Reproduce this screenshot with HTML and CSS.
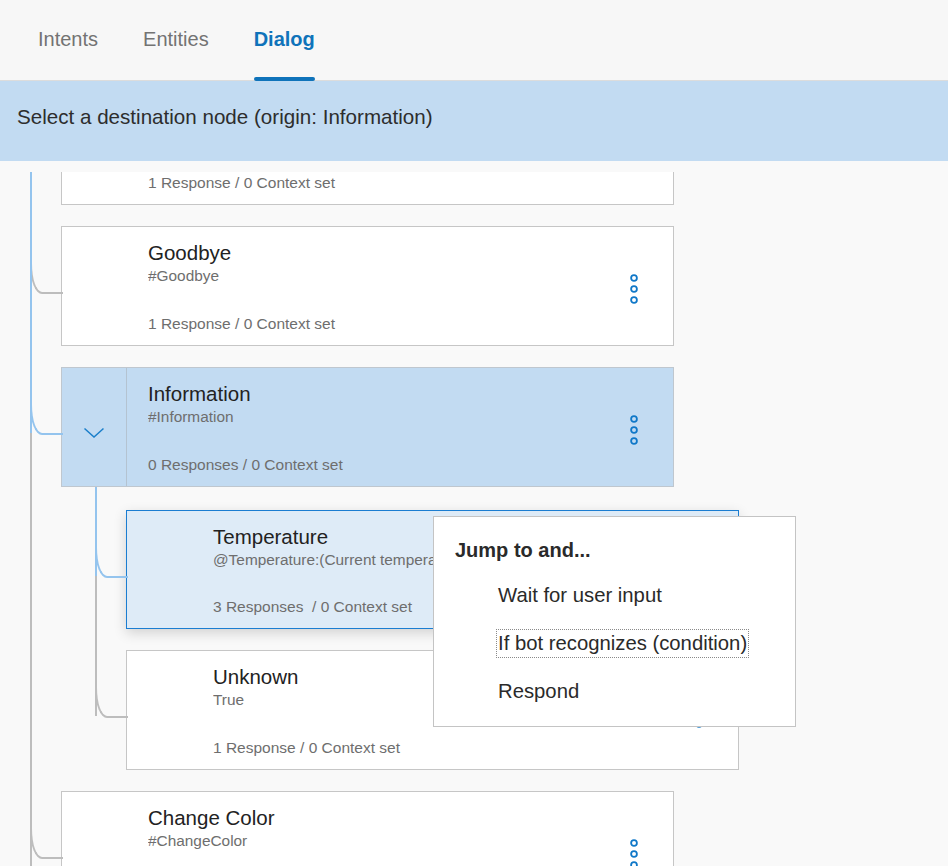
FILE: index.html
```html
<!DOCTYPE html>
<html lang="en">
<head>
<meta charset="utf-8">
<title>Dialog</title>
<link rel="stylesheet" href="styles.css">
</head>
<body>
<header class="tabs">
  <a class="tab">Intents</a>
  <a class="tab">Entities</a>
  <a class="tab active">Dialog</a>
</header>
<div class="banner">Select a destination node (origin: Information)</div>
<main class="canvas">
  <div class="viewport">
    <ul class="nodes level1">
      <li class="node on-rail">
        <div class="card">
          <div class="body">
            <div class="meta">1 Response / 0 Context set</div>
          </div>
        </div>
      </li>
      <li class="node on-rail">
        <div class="card">
          <div class="body">
            <div class="title">Goodbye</div>
            <div class="cond">#Goodbye</div>
            <div class="meta">1 Response / 0 Context set</div>
          </div>
          <svg class="kebab" width="12" height="32" viewBox="0 0 12 32"><circle cx="6" cy="5" r="2.9"/><circle cx="6" cy="16" r="2.9"/><circle cx="6" cy="27" r="2.9"/></svg>
        </div>
      </li>
      <li class="node branch-on">
        <div class="card selected">
          <div class="toggle">
            <svg width="22" height="12" viewBox="0 0 22 12"><path d="M1.5 1.5 L11 10 L20.5 1.5" fill="none" stroke="#1b7fca" stroke-width="1.5"/></svg>
          </div>
          <div class="body">
            <div class="title">Information</div>
            <div class="cond">#Information</div>
            <div class="meta">0 Responses / 0 Context set</div>
          </div>
          <svg class="kebab" width="12" height="32" viewBox="0 0 12 32"><circle cx="6" cy="5" r="2.9"/><circle cx="6" cy="16" r="2.9"/><circle cx="6" cy="27" r="2.9"/></svg>
        </div>
        <ul class="nodes children">
          <li class="node branch-on first">
            <div class="card target">
              <div class="body">
                <div class="title">Temperature</div>
                <div class="cond">@Temperature:(Current temperature)</div>
                <div class="meta">3 Responses&nbsp; / 0 Context set</div>
              </div>
              <svg class="kebab" width="12" height="32" viewBox="0 0 12 32"><circle cx="6" cy="5" r="2.9"/><circle cx="6" cy="16" r="2.9"/><circle cx="6" cy="27" r="2.9"/></svg>
            </div>
            <div class="popup">
              <h3 class="popup-title">Jump to and...</h3>
              <ul class="popup-list">
                <li class="popup-item">Wait for user input</li>
                <li class="popup-item focus">If bot recognizes (condition)</li>
                <li class="popup-item">Respond</li>
              </ul>
            </div>
          </li>
          <li class="node last">
            <div class="card">
              <div class="body">
                <div class="title">Unknown</div>
                <div class="cond">True</div>
                <div class="meta">1 Response / 0 Context set</div>
              </div>
              <svg class="kebab" width="12" height="32" viewBox="0 0 12 32"><circle cx="6" cy="5" r="2.9"/><circle cx="6" cy="16" r="2.9"/><circle cx="6" cy="27" r="2.9"/></svg>
            </div>
          </li>
        </ul>
      </li>
      <li class="node">
        <div class="card">
          <div class="body">
            <div class="title">Change Color</div>
            <div class="cond">#ChangeColor</div>
          </div>
          <svg class="kebab" width="12" height="32" viewBox="0 0 12 32"><circle cx="6" cy="5" r="2.9"/><circle cx="6" cy="16" r="2.9"/><circle cx="6" cy="27" r="2.9"/></svg>
        </div>
      </li>
    </ul>
  </div>
</main>
</body>
</html>
```
FILE: styles.css
```css
* { box-sizing: border-box; }
html, body { margin: 0; padding: 0; }
body {
  width: 948px;
  height: 866px;
  overflow: hidden;
  background: #f9f9f9;
  font-family: "Liberation Sans", Arial, Helvetica, sans-serif;
  color: #222;
}

/* tabs */
.tabs {
  display: flex;
  gap: 45px;
  height: 81px;
  padding: 27px 0 0 38px;
  background: #f7f7f7;
  border-bottom: 1px solid #dcdcdc;
}
.tab {
  font-size: 20px;
  line-height: 24px;
  color: #737373;
  text-decoration: none;
}
.tab::after {
  content: "";
  display: block;
  height: 4px;
  margin-top: 26px;
  border-radius: 2px;
}
.tab.active { color: #0f73ba; font-weight: bold; }
.tab.active::after { background: #0f73ba; }

/* banner */
.banner {
  height: 80px;
  padding: 24px 17px 0;
  background: #c2dbf2;
  font-size: 20.6px;
  line-height: 24px;
  color: #2d2d2d;
}

/* canvas */
.canvas { padding-top: 11px; }
.viewport { height: 694px; overflow: hidden; position: relative; }

.nodes { list-style: none; margin: 0; padding: 0 0 0 65px; }
.level1 { padding-left: 61px; margin-top: -108px; }

.node { position: relative; padding-top: 21px; }
.node.first { padding-top: 23px; }

/* vertical rail */
.node::before {
  content: "";
  position: absolute;
  left: -31px;
  top: 0;
  bottom: 0;
  width: 2px;
  background: #bdbdbd;
  z-index: 2;
}
/* elbow connector */
.node::after {
  content: "";
  position: absolute;
  left: -31px;
  top: 55px;
  width: 31px;
  height: 32px;
  border-left: 2px solid #bdbdbd;
  border-bottom: 2px solid #bdbdbd;
  border-bottom-left-radius: 12px 30px;
  z-index: 1;
}
.node.first::after { top: 57px; }

.node.on-rail::before { background: #94c4ee; }
.node.branch-on::before { background: linear-gradient(#94c4ee 0 87px, #bdbdbd 87px); }
.node.branch-on.first::before { background: linear-gradient(#94c4ee 0 89px, #bdbdbd 89px); }
.node.branch-on::after { border-color: #94c4ee; }
.node.last::before { bottom: auto; height: 87px; }

/* cards */
.card {
  display: flex;
  width: 613px;
  height: 120px;
  background: #fff;
  border: 1px solid #c6c6c6;
}
.body {
  flex: 1;
  min-width: 0;
  display: flex;
  flex-direction: column;
  padding: 14px 0 12px 86px;
}
.title { font-size: 20.5px; line-height: 24px; color: #222; }
.cond {
  margin-top: 2px;
  font-size: 15.4px;
  line-height: 18px;
  color: #6e6e6e;
  white-space: nowrap;
  overflow: hidden;
}
.meta { margin-top: auto; font-size: 15.5px; line-height: 18px; color: #6e6e6e; white-space: nowrap; }
.kebab { flex: none; margin: 46px 33px 0 0; fill: none; stroke: #1078c8; stroke-width: 1.8; }

.card.selected { background: #c2dbf2; border-color: #bfc7cf; }
.toggle {
  flex: none;
  width: 65px;
  border-right: 1px solid #b4c3d1;
  display: flex;
  align-items: center;
  justify-content: center;
  padding-top: 12px;
}
.selected .body { padding-left: 21px; }

.card.target {
  height: 119px;
  background: #deebf7;
  border-color: #1b7dd1;
  box-shadow: 0 4px 12px rgba(0, 0, 0, 0.16);
}

/* popup menu */
.popup {
  position: absolute;
  left: 307px;
  top: 29px;
  width: 363px;
  height: 211px;
  padding: 23px 0 0 21px;
  background: #fff;
  border: 1px solid #c4c4c4;
  z-index: 10;
}
.popup-title {
  margin: 0;
  font-size: 20px;
  line-height: 20px;
  font-weight: bold;
  color: #2a2a2a;
}
.popup-list {
  list-style: none;
  margin: 22px 0 0;
  padding: 0 0 0 42px;
  display: flex;
  flex-direction: column;
  align-items: flex-start;
  gap: 21px;
}
.popup-item {
  font-size: 20.3px;
  line-height: 27px;
  padding: 0 1px;
  color: #2a2a2a;
}
.popup-item.focus { outline: 1px dotted #8a8a8a; }
```
